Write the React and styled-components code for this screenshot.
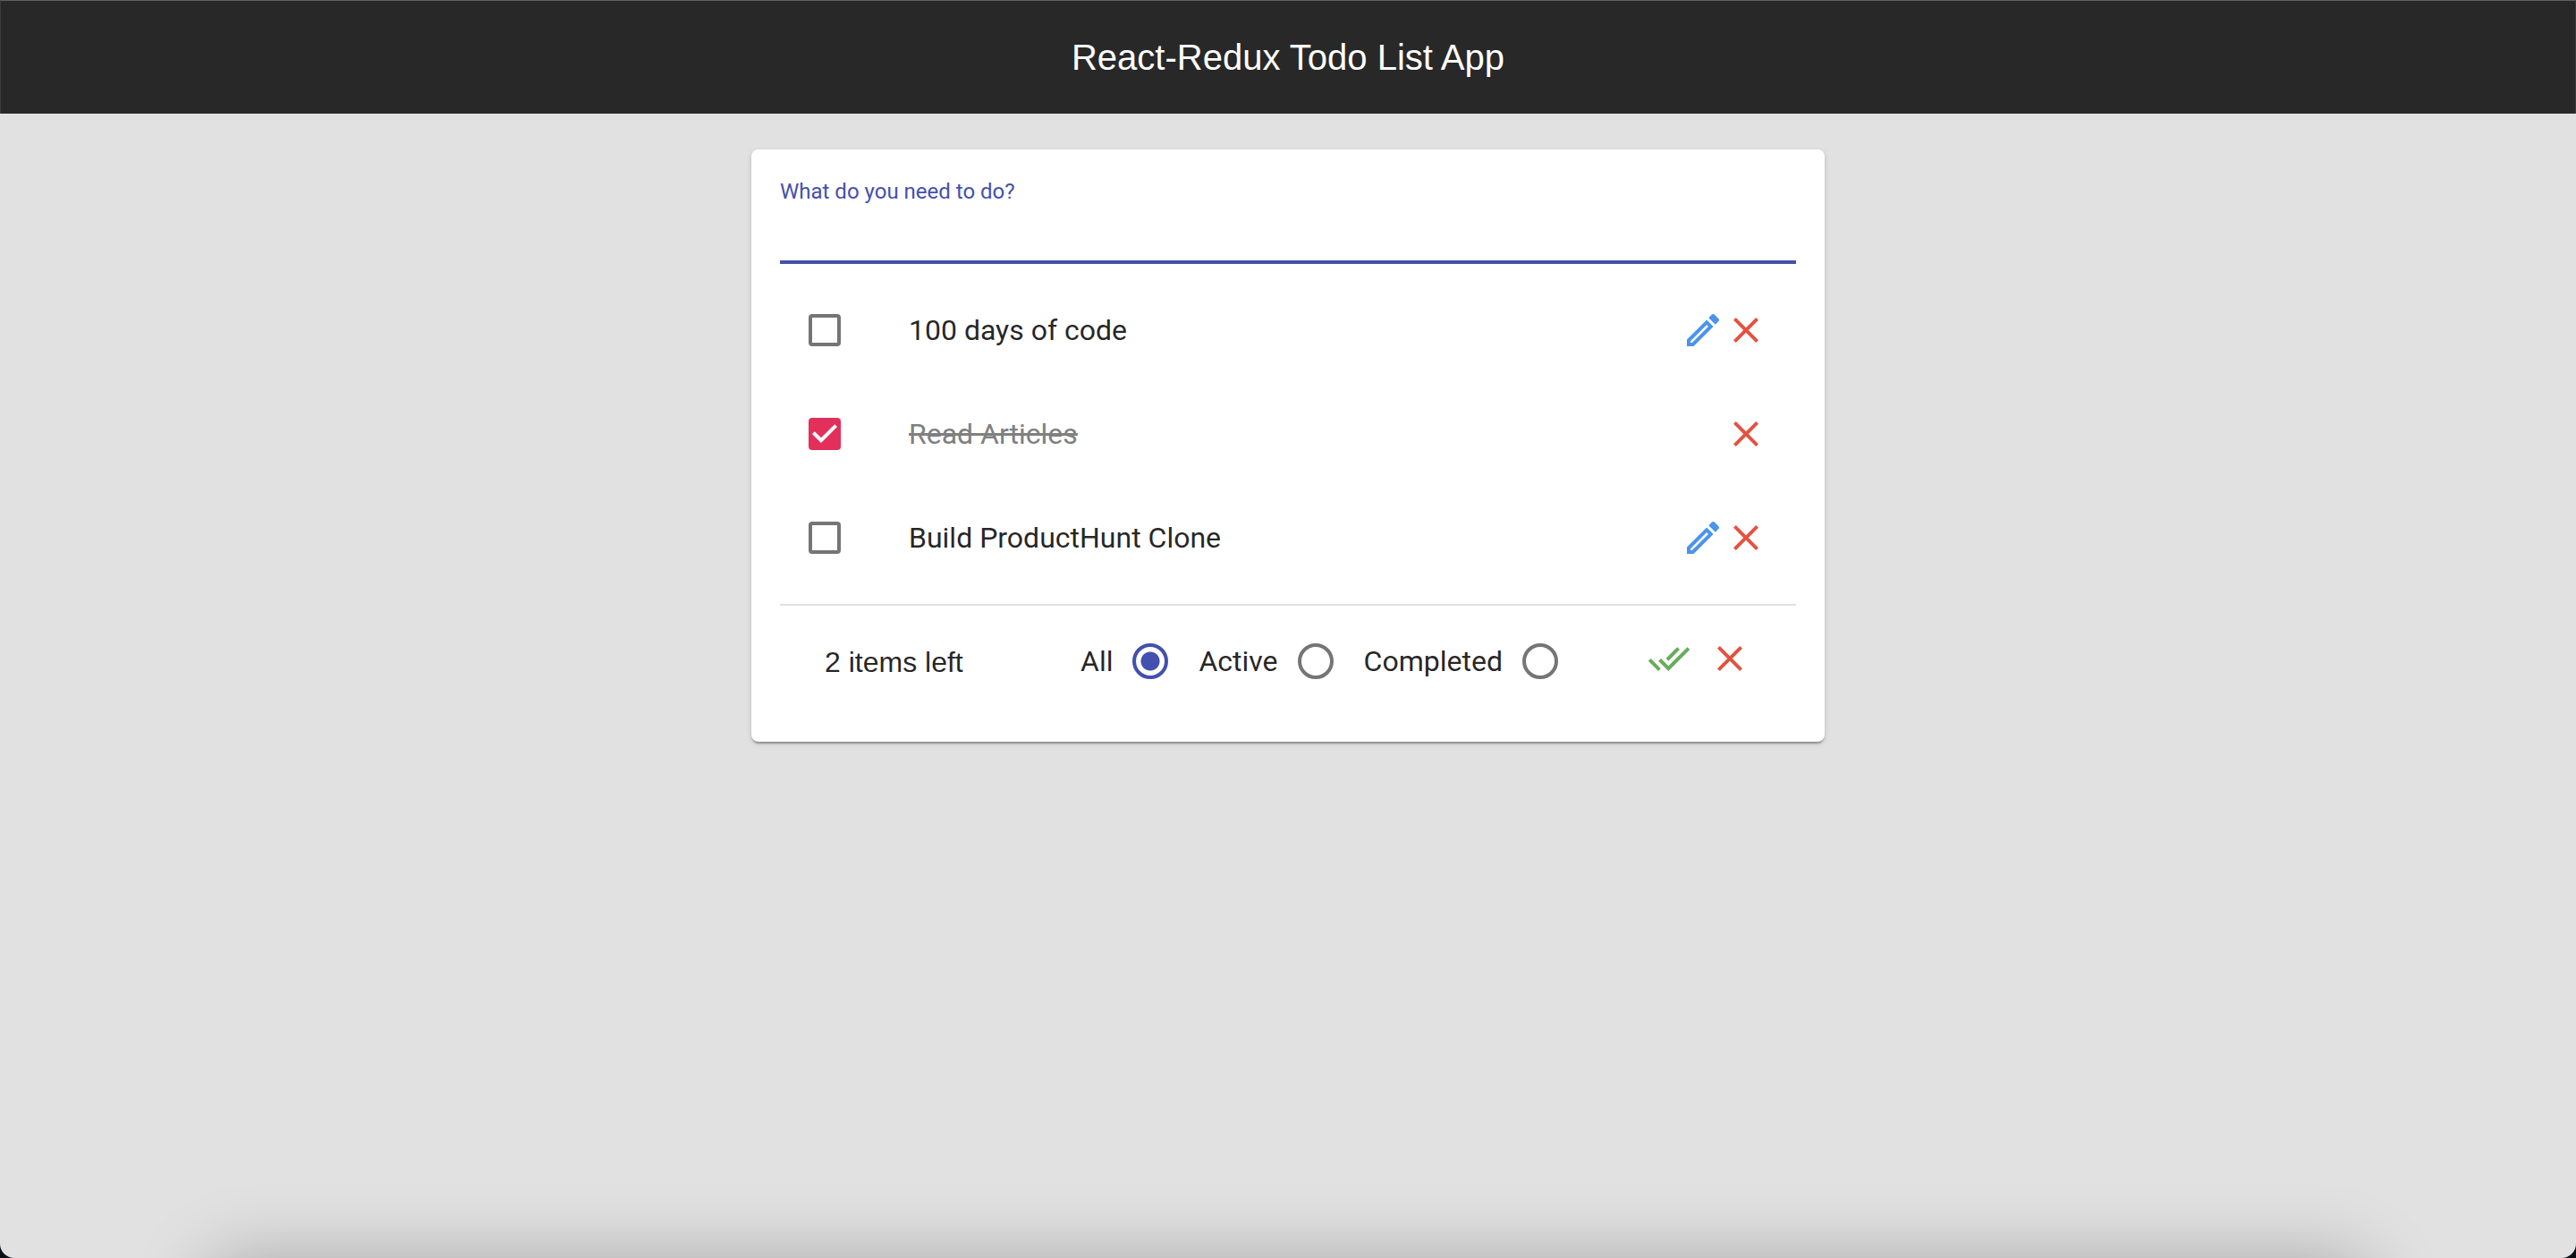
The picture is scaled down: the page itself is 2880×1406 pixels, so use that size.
import React, { useState } from "react";
import styled, { createGlobalStyle } from "styled-components";

const GlobalStyle = createGlobalStyle`
  *, *::before, *::after { box-sizing: border-box; }
  body { margin: 0; background: #0a1116; }
`;

const Page = styled.div`
  position: relative;
  display: flex;
  flex-direction: column;
  min-height: 100vh;
  overflow: hidden;
  border-radius: 0 0 16px 16px;
  background: #e1e1e1;
  color: rgba(0, 0, 0, 0.87);
  font-family: Roboto, "Liberation Sans", sans-serif;
  font-size: 32px;
  line-height: 48px;
`;

const Header = styled.header`
  display: flex;
  align-items: center;
  justify-content: center;
  height: 127px;
  border: 1px solid #3b3b3b;
  border-top-color: #5e6064;
  border-bottom: 0;
  background: #282828;
`;

const Title = styled.h1`
  margin: 0;
  color: #fff;
  font: 400 40px/48px "Liberation Sans", Arial, sans-serif;
`;

const Main = styled.main`
  display: flex;
  justify-content: center;
  padding: 40px 32px;
`;

const Card = styled.section`
  flex: 0 1 1200px;
  padding: 34px 32px 46px;
  border-radius: 8px;
  background: #fff;
  box-shadow: 0 4px 2px -2px rgba(0, 0, 0, 0.2), 0 2px 2px rgba(0, 0, 0, 0.14),
    0 2px 6px rgba(0, 0, 0, 0.12);
`;

const Field = styled.form`
  display: flex;
  flex-direction: column;
`;

const FieldLabel = styled.label`
  color: #4350af;
  font-size: 24px;
  line-height: 26px;
`;

const FieldInput = styled.input`
  height: 68px;
  padding: 12px 0;
  border: 0;
  border-bottom: 4px solid #4350af;
  border-radius: 0;
  outline: 0;
  background: transparent;
  color: inherit;
  font: inherit;
`;

const List = styled.ul`
  margin: 0;
  padding: 16px 0;
  border-bottom: 2px solid #e0e0e0;
  list-style: none;
`;

const Item = styled.li`
  display: flex;
  align-items: center;
  height: 116px;
  padding: 0 32px;
`;

const ItemLabel = styled.label`
  display: flex;
  flex: 1;
  align-items: center;
  gap: 76px;
  cursor: pointer;
`;

const ItemText = styled.span`
  color: ${(p) => (p.$done ? "gray" : "inherit")};
  text-decoration: ${(p) => (p.$done ? "line-through" : "none")};
`;

const CheckHolder = styled.span`
  display: grid;
  place-items: center;
  > * { grid-area: 1 / 1; }
`;

const Checkbox = styled.input`
  width: 36px;
  height: 36px;
  margin: 0;
  appearance: none;
  border: 4px solid #757575;
  border-radius: 4px;
  cursor: pointer;
  &:checked { border-color: #e2305b; background: #e2305b; }
`;

const Icon = styled.svg`
  display: block;
  width: 48px;
  height: 48px;
  fill: currentColor;
  pointer-events: none;
`;

const TickIcon = styled(Icon)`
  width: 36px;
  height: 36px;
`;

const IconButton = styled.button`
  padding: 0;
  border: 0;
  background: none;
  color: ${(p) => p.$color};
  cursor: pointer;
`;

const Actions = styled.div`
  display: flex;
  gap: ${(p) => p.$gap || 0}px;
`;

const Footer = styled.footer`
  display: grid;
  grid-template-columns: 286px 1fr auto;
  padding: 20px 50px 0;
`;

const Count = styled.p`
  margin: 0;
  font-family: "Liberation Sans", Arial, sans-serif;
  line-height: 86px;
`;

const Filters = styled.fieldset`
  display: flex;
  gap: 12px;
  min-width: 0;
  margin: 0;
  padding: 0;
  border: 0;
`;

const FilterLabel = styled.label`
  display: flex;
  align-items: center;
  height: 84px;
  cursor: pointer;
`;

const Radio = styled.input`
  width: 40px;
  height: 40px;
  margin: 0 22px;
  appearance: none;
  border: 4px solid #757575;
  border-radius: 50%;
  cursor: pointer;
  &:checked {
    border-color: #4350af;
    background: radial-gradient(circle, #4350af 0 10px, transparent 11px);
  }
`;

const FooterActions = styled(Actions)`
  align-self: start;
  padding-top: 15px;
`;

const DockShadow = styled.div`
  position: absolute;
  top: 100%;
  right: 8%;
  left: 8%;
  height: 160px;
  border-radius: 40px;
  box-shadow: 0 0 80px rgba(0, 0, 0, 0.25);
  pointer-events: none;
`;

const paths = {
  edit: "M14.06 9.02l.92.92L5.92 19H5v-.92l9.06-9.06M17.66 3c-.25 0-.51.1-.7.29l-1.83 1.83 3.75 3.75 1.83-1.83c.39-.39.39-1.02 0-1.41l-2.34-2.34c-.2-.2-.45-.29-.71-.29zm-3.6 3.19L3 17.25V21h3.75L17.81 9.94l-3.75-3.75z",
  close: "M19 6.41L17.59 5 12 10.59 6.41 5 5 6.41 10.59 12 5 17.59 6.41 19 12 13.41 17.59 19 19 17.59 13.41 12z",
  doneAll: "M18 7l-1.41-1.41-6.34 6.34 1.41 1.41L18 7zm4.24-1.41L11.66 16.17 7.48 12l-1.41 1.41L11.66 19l12-12-1.42-1.41zM.41 13.41L6 19l1.41-1.41L1.83 12 .41 13.41z",
};

function ActionButton({ icon, color, label, onClick }) {
  return (
    <IconButton type="button" $color={color} aria-label={label} onClick={onClick}>
      <Icon viewBox="0 0 24 24" aria-hidden="true">
        <path d={paths[icon]} />
      </Icon>
    </IconButton>
  );
}

const RED = "#e35241";
const BLUE = "#4994ec";
const GREEN = "#67ac5b";
const filters = ["All", "Active", "Completed"];

export default function App() {
  const [todos, setTodos] = useState([
    { id: 1, text: "100 days of code", done: false },
    { id: 2, text: "Read Articles", done: true },
    { id: 3, text: "Build ProductHunt Clone", done: false },
  ]);
  const [filter, setFilter] = useState("All");
  const [draft, setDraft] = useState("");

  const toggle = (id) =>
    setTodos(todos.map((t) => (t.id === id ? { ...t, done: !t.done } : t)));
  const remove = (id) => setTodos(todos.filter((t) => t.id !== id));
  const edit = (todo) => {
    setDraft(todo.text);
    remove(todo.id);
  };
  const add = (event) => {
    event.preventDefault();
    if (!draft.trim()) return;
    setTodos([...todos, { id: Date.now(), text: draft.trim(), done: false }]);
    setDraft("");
  };
  const visible = todos.filter(
    (t) => filter === "All" || t.done === (filter === "Completed")
  );

  return (
    <Page>
      <GlobalStyle />
      <Header>
        <Title>React-Redux Todo List App</Title>
      </Header>
      <Main>
        <Card>
          <Field onSubmit={add}>
            <FieldLabel htmlFor="new-todo">What do you need to do?</FieldLabel>
            <FieldInput
              id="new-todo"
              type="text"
              autoComplete="off"
              value={draft}
              onChange={(e) => setDraft(e.target.value)}
            />
          </Field>
          <List>
            {visible.map((todo) => (
              <Item key={todo.id}>
                <ItemLabel>
                  <CheckHolder>
                    <Checkbox
                      type="checkbox"
                      checked={todo.done}
                      onChange={() => toggle(todo.id)}
                    />
                    {todo.done && (
                      <TickIcon viewBox="3 3 18 18" color="#fff" aria-hidden="true">
                        <path d="M10 17l-5-5 1.41-1.41L10 14.17l7.59-7.59L19 8l-9 9z" />
                      </TickIcon>
                    )}
                  </CheckHolder>
                  <ItemText $done={todo.done}>{todo.text}</ItemText>
                </ItemLabel>
                <Actions>
                  {!todo.done && (
                    <ActionButton icon="edit" color={BLUE} label="Edit" onClick={() => edit(todo)} />
                  )}
                  <ActionButton icon="close" color={RED} label="Delete" onClick={() => remove(todo.id)} />
                </Actions>
              </Item>
            ))}
          </List>
          <Footer>
            <Count>{todos.filter((t) => !t.done).length} items left</Count>
            <Filters aria-label="Filter">
              {filters.map((name) => (
                <FilterLabel key={name}>
                  {name}
                  <Radio
                    type="radio"
                    name="filter"
                    checked={filter === name}
                    onChange={() => setFilter(name)}
                  />
                </FilterLabel>
              ))}
            </Filters>
            <FooterActions $gap={20}>
              <ActionButton
                icon="doneAll"
                color={GREEN}
                label="Complete all"
                onClick={() => setTodos(todos.map((t) => ({ ...t, done: true })))}
              />
              <ActionButton
                icon="close"
                color={RED}
                label="Clear completed"
                onClick={() => setTodos(todos.filter((t) => !t.done))}
              />
            </FooterActions>
          </Footer>
        </Card>
      </Main>
      <DockShadow />
    </Page>
  );
}
